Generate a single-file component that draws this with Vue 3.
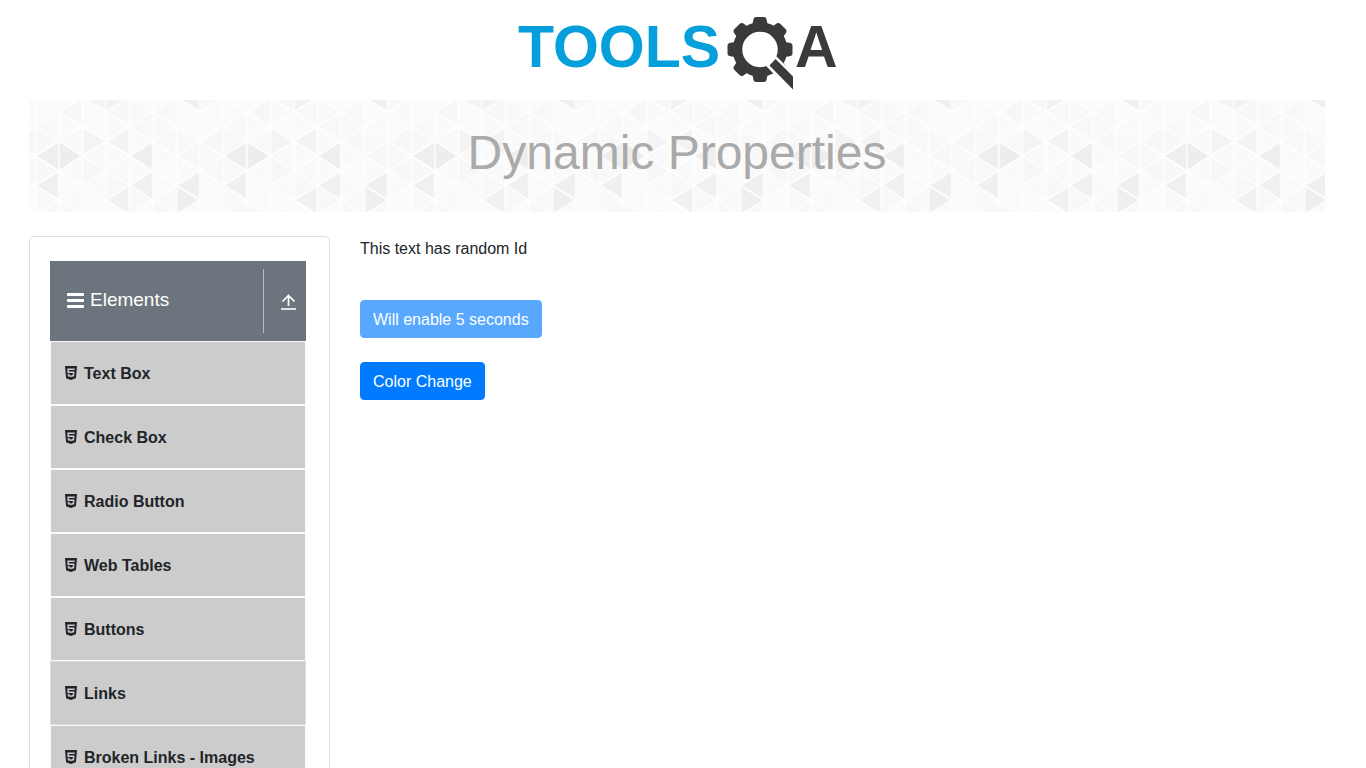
<script setup>
const items = [
  { label: 'Text Box' },
  { label: 'Check Box' },
  { label: 'Radio Button' },
  { label: 'Web Tables' },
  { label: 'Buttons' },
  { label: 'Links', focused: true },
  { label: 'Broken Links - Images' },
]

// Triangle lattice of the banner: eight strips per tile, each filled by interlocking triangles.
const stripWidth = 23.5
const halfStep = 14.7
const offsetY = -2.7
const accents = {
  '0-4': '#eeeeee', '0-6': '#f0f0f0', '1-4': '#ededed', '2-3': '#f4f4f4',
  '2-0': '#f5f5f5', '3-0': '#f2f2f2', '3-3': '#f3f3f3', '3-7': '#f1f1f1',
  '4-4': '#eeeeee', '4-6': '#f0f0f0', '6-6': '#efefef', '6-7': '#efefef', '6-0': '#f0f0f0',
  '7-3': '#f7f7f7', '0-5': '#f8f8f8', '2-5': '#f7f7f7', '5-1': '#f8f8f8', '1-1': '#f7f7f7',
}
const soft = ['#fafafa', '#f9f9f9', '#fbfbfb', '#f8f8f8', '#fafafa']
const triangles = []
for (let c = 0; c < 8; c++) {
  for (let h = -1; h < 9; h++) {
    const left = c * stripWidth
    const right = left + stripWidth
    const y = offsetY + h * halfStep
    const apexLeft = (c + h) % 2 === 0
    const apex = apexLeft ? left : right
    const base = apexLeft ? right : left
    triangles.push({
      key: `${c}-${h}`,
      points: `${apex},${y} ${base},${y - halfStep} ${base},${y + halfStep}`,
      fill: accents[`${c}-${h}`] || soft[(c * 3 + (h + 1) * 2) % 5],
    })
  }
}
const teeth = [0, 45, 90, 135, 180, 225, 270, 315]
</script>

<template>
  <div class="page">
    <header>
      <a class="brand" href="#" aria-label="TOOLSQA">
        <svg width="324" height="80" viewBox="517 12 324 80">
          <text class="word blue" x="518" y="67">TOOLS</text>
          <g fill="#3a3a3a">
            <path
              v-for="t in teeth"
              :key="t"
              :transform="`rotate(${t} 760 49.5)`"
              d="M749 26L752.500 24L753.500 19Q754 17 756 17H764Q766 17 766.500 19L767.500 24L771 26Z"
            />
            <circle cx="760" cy="49.500" r="22.500" fill="none" stroke="#3a3a3a" stroke-width="9.500" />
            <path d="M775 58.500L794 77V91L769 65.500Z" fill="#fff" stroke="#fff" stroke-width="5" />
            <path d="M775.500 59L793 76.500V89.500L769.500 65.500Z" />
          </g>
          <text class="word dark" x="795" y="67">A</text>
        </svg>
      </a>
    </header>

    <div class="banner">
      <svg class="lattice" width="100%" height="100%" aria-hidden="true">
        <defs>
          <pattern id="lattice" x="6.500" y="0" width="188" height="112" patternUnits="userSpaceOnUse">
            <polygon
              v-for="t in triangles"
              :key="t.key"
              :points="t.points"
              :fill="t.fill"
              stroke="#fefefe"
              stroke-width="1.500"
              stroke-linejoin="round"
            />
          </pattern>
        </defs>
        <rect width="100%" height="100%" fill="url(#lattice)" />
      </svg>
      <h1>Dynamic Properties</h1>
    </div>

    <div class="columns">
      <aside>
        <button class="group" type="button">
          <span class="group-title">
            <svg width="17" height="15" viewBox="0 0 17 15" fill="#fff">
              <rect width="17" height="3" rx="0.700" />
              <rect y="6" width="17" height="3" rx="0.700" />
              <rect y="12" width="17" height="3" rx="0.700" />
            </svg>
            Elements
          </span>
          <span class="divider"></span>
          <span class="toggle">
            <svg width="15" height="17" viewBox="0 0 15 17" fill="none" stroke="#fff">
              <path d="M7.500 12V1.500M1.500 7.500L7.500 1.500L13.500 7.500" stroke-width="1.700" />
              <path d="M0 15H15" stroke="#e0e3e5" stroke-width="2" />
            </svg>
          </span>
        </button>
        <ul>
          <li v-for="item in items" :key="item.label" :class="{ focused: item.focused }">
            <a href="#">
              <svg width="12" height="14" viewBox="0 32 384 448" fill="#212529" aria-hidden="true">
                <path d="M0 32l34.900 395.800L191.500 480l157.600-52.200L384 32H0zm308.200 127.900H124.400l4.100 49.400h175.600l-13.600 148.400-97.900 27v.3h-1.100l-98.700-27.300-6-75.800h47.700L138 320l53.500 14.500 53.700-14.500 6-62.200H84.300L71.500 112.200h241.100l-4.400 47.700z" />
              </svg>
              {{ item.label }}
            </a>
          </li>
        </ul>
      </aside>

      <main>
        <p>This text has random Id</p>
        <button class="action" type="button" disabled>Will enable 5 seconds</button>
        <button class="action" type="button">Color Change</button>
      </main>
    </div>
  </div>
</template>

<style>
body {
  margin: 0;
  background: #fff;
}
</style>

<style scoped>
* {
  box-sizing: border-box;
}
.page {
  height: 100vh;
  overflow: hidden;
  padding: 0 41px 0 29px;
  color: #212529;
  font: 16px/24px "Liberation Sans", Arial, sans-serif;
}
header {
  display: flex;
  justify-content: center;
  padding: 12px 0 8px 4px;
}
.brand,
.brand svg {
  display: block;
}
.word {
  font: bold 59px "Liberation Sans", Arial, sans-serif;
}
.blue {
  fill: #05a0dc;
}
.dark {
  fill: #3a3a3a;
}
.banner {
  position: relative;
  padding: 24px 0 30px;
}
.lattice {
  position: absolute;
  inset: 0;
}
h1 {
  position: relative;
  margin: 0;
  color: #aaa;
  font-size: 48px;
  font-weight: 400;
  line-height: 58px;
  text-align: center;
}
.columns {
  display: flex;
  align-items: flex-start;
  gap: 30px;
  margin-top: 24px;
}
aside {
  flex: 0 0 301px;
  padding: 24px 23px 24px 20px;
  border: 1px solid #dfdfdf;
  border-radius: 5px;
}
.group {
  display: flex;
  align-items: center;
  width: 100%;
  height: 80px;
  padding: 0 10px 0 17px;
  border: 0;
  background: #6c757d;
  color: #fff;
  font: 19px/24px "Liberation Sans", Arial, sans-serif;
}
.group-title {
  display: flex;
  flex: 1;
  align-items: center;
  gap: 6px;
  padding-bottom: 2px;
}
.divider {
  width: 1px;
  height: 64px;
  margin-right: 17px;
  background: #b9bdc1;
}
.toggle {
  padding-top: 2px;
}
.toggle svg {
  display: block;
}
ul {
  margin: 0;
  padding: 0;
  list-style: none;
}
li {
  border: 1px solid #f8f9fa;
  background: #ccc;
}
li.focused {
  border-color: #d8dce3;
}
li a {
  display: flex;
  align-items: center;
  gap: 7px;
  height: 62px;
  padding: 2px 0 0 14px;
  color: #212529;
  font-weight: 700;
  text-decoration: none;
}
li svg {
  margin-bottom: 2px;
}
main {
  display: flex;
  flex: 1;
  flex-direction: column;
  align-items: flex-start;
  gap: 24px;
}
p {
  margin: 0;
  padding: 1px 0 15px;
}
.action {
  padding: 7px 12px 5px;
  border: 1px solid #007bff;
  border-radius: 4px;
  background: #007bff;
  color: #fff;
  font: 16px/24px "Liberation Sans", Arial, sans-serif;
}
.action:disabled {
  opacity: 0.65;
}
</style>
